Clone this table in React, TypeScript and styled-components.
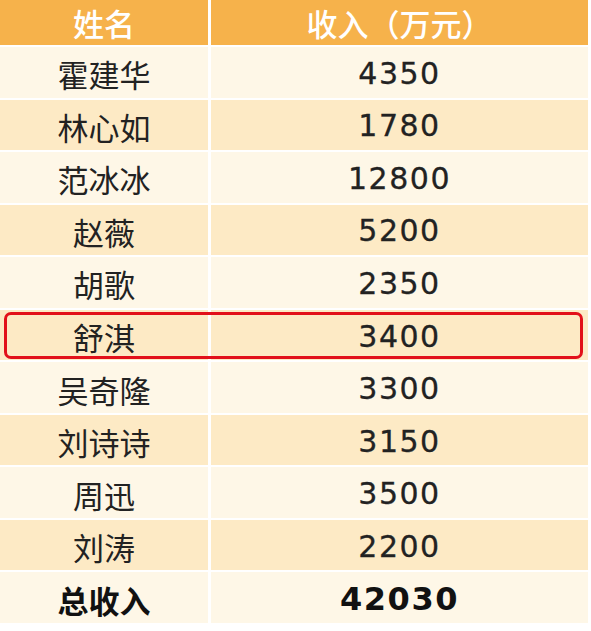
import React from "react";
import styled, { createGlobalStyle } from "styled-components";

const GlobalStyle = createGlobalStyle`
  html, body {
    margin: 0;
    padding: 0;
    background: #ffffff;
  }
  body {
    font-family: "Noto Sans CJK SC", "Noto Sans", sans-serif;
  }
`;

const Table = styled.div`
  display: flex;
  flex-direction: column;
  gap: 2px;
  width: 588px;
  height: 623px;
  background: #ffffff;
`;

const Row = styled.div<{ $head?: boolean; $marked?: boolean }>`
  position: relative;
  display: grid;
  grid-template-columns: 208px 1fr;
  column-gap: 3px;
  flex: ${(p) => (p.$head ? "0 0 45px" : "1 1 0")};

  ${(p) =>
    p.$marked &&
    `
    &::after {
      content: "";
      position: absolute;
      top: 2px;
      bottom: 1px;
      left: 4px;
      right: 5px;
      border: 3px solid #e2101a;
      border-radius: 7px;
      pointer-events: none;
    }
  `}
`;

type Tone = "head" | "cream" | "peach";

const tones: Record<Tone, string> = {
  head: "#f6b24b",
  cream: "#fef7e7",
  peach: "#fdeac5",
};

const Cell = styled.div<{ $tone: Tone; $bold?: boolean; $num?: boolean }>`
  display: flex;
  align-items: center;
  justify-content: center;
  padding-top: ${(p) => (p.$tone === "head" ? "0" : "3px")};
  background: ${(p) => tones[p.$tone]};
  color: ${(p) => (p.$tone === "head" ? "#ffffff" : p.$bold ? "#111111" : "#222222")};
  font-family: ${(p) =>
    p.$num && p.$tone !== "head"
      ? `"DejaVu Sans", "Liberation Sans", sans-serif`
      : `"Noto Sans CJK SC", "Noto Sans", sans-serif`};
  font-size: ${(p) => (p.$num && p.$tone !== "head" ? (p.$bold ? "32px" : "30px") : "31px")};
  font-weight: ${(p) => (p.$bold ? 700 : p.$tone === "head" ? 500 : 400)};
  letter-spacing: ${(p) => (p.$num && p.$tone !== "head" ? "1.5px" : "0")};
  line-height: 1;
  white-space: nowrap;
  -webkit-text-stroke: ${(p) => (p.$num && p.$tone !== "head" && !p.$bold ? "0.3px #222222" : "0")};
`;

const rows: [string, string][] = [
  ["霍建华", "4350"],
  ["林心如", "1780"],
  ["范冰冰", "12800"],
  ["赵薇", "5200"],
  ["胡歌", "2350"],
  ["舒淇", "3400"],
  ["吴奇隆", "3300"],
  ["刘诗诗", "3150"],
  ["周迅", "3500"],
  ["刘涛", "2200"],
];

export default function App() {
  const highlightIndex = 5;
  return (
    <>
      <GlobalStyle />
      <Table>
        <Row $head>
          <Cell $tone="head">姓名</Cell>
          <Cell $tone="head" $num>
            收入（万元）
          </Cell>
        </Row>
        {rows.map(([name, income], i) => {
          const tone: Tone = i % 2 === 0 ? "cream" : "peach";
          return (
            <Row key={name} $marked={i === highlightIndex}>
              <Cell $tone={tone}>{name}</Cell>
              <Cell $tone={tone} $num>
                {income}
              </Cell>
            </Row>
          );
        })}
        <Row>
          <Cell $tone="cream" $bold>
            总收入
          </Cell>
          <Cell $tone="cream" $bold $num>
            42030
          </Cell>
        </Row>
      </Table>
    </>
  );
}
